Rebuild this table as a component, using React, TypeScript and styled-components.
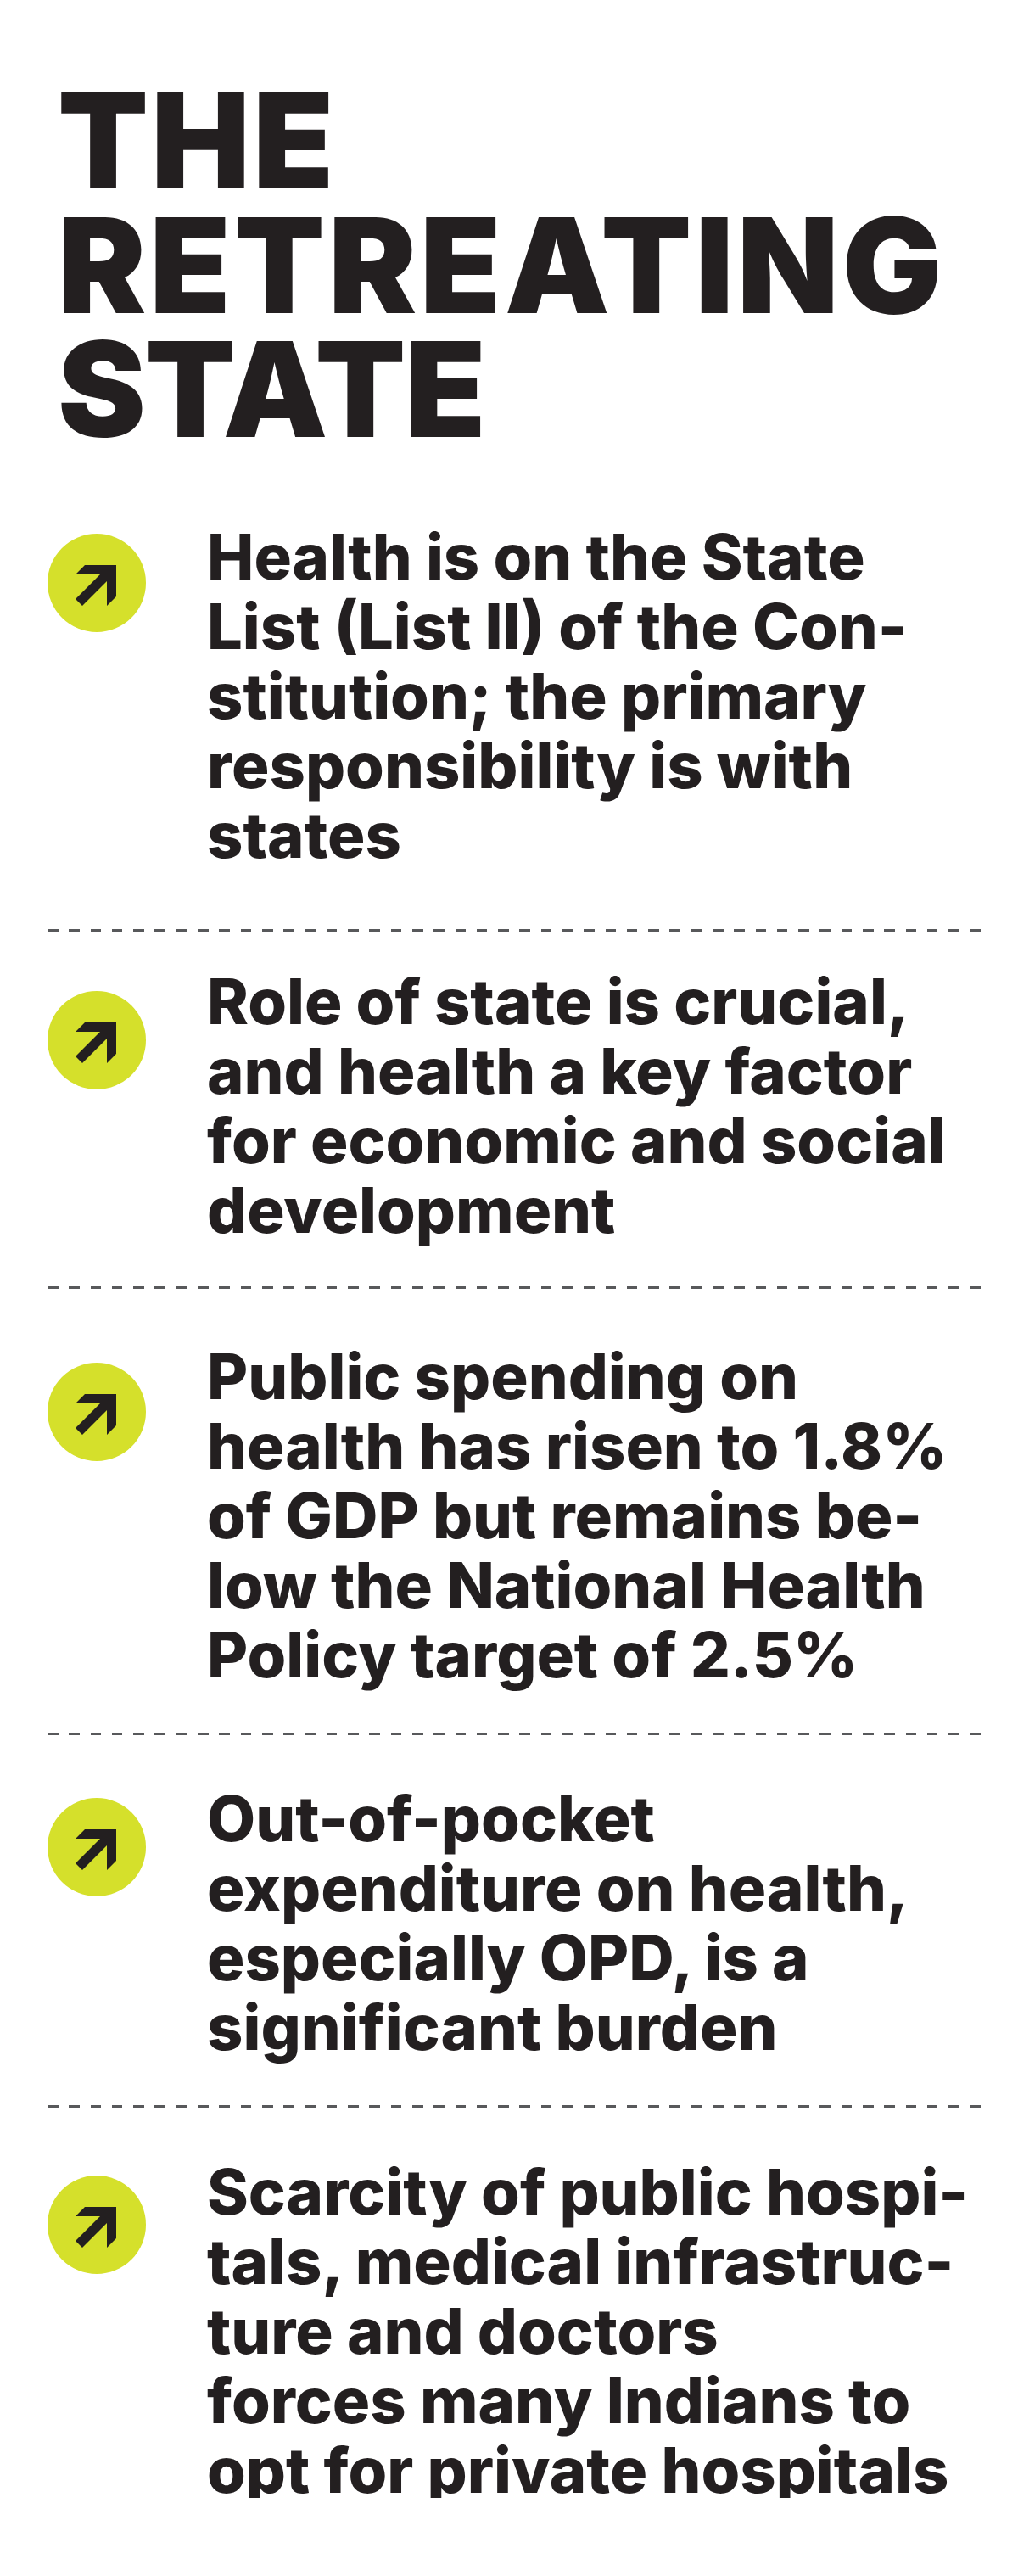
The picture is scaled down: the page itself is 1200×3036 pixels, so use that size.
import * as React from "react";
import styled, { createGlobalStyle } from "styled-components";

const GlobalStyle = createGlobalStyle`
  html, body {
    margin: 0;
    padding: 0;
    background: #ffffff;
  }
  body {
    font-family: "Inter", "Liberation Sans", sans-serif;
    color: #231f20;
  }
`;

const Sheet = styled.div`
  width: 1200px;
  height: 2944px;
  overflow: hidden;
  box-sizing: border-box;
  padding: 93px 44px 0 56px;
`;

const Title = styled.h1`
  margin: 0;
  padding-left: 12px;
  font-family: "Inter", "Liberation Sans", sans-serif;
  font-weight: 900;
  font-size: 156px;
  line-height: 146.5px;
  text-transform: uppercase;
`;

const TitleLine = styled.span<{ $tracking: number }>`
  display: block;
  white-space: nowrap;
  letter-spacing: ${(p) => p.$tracking}px;
`;

const List = styled.div`
  display: flex;
  flex-direction: column;
`;

const Row = styled.div<{ $top: number; $bottom: number; $iconTop: number }>`
  display: grid;
  grid-template-columns: 116px 1fr;
  column-gap: 72px;
  align-items: start;
  padding-top: ${(p) => p.$top}px;
  padding-bottom: ${(p) => p.$bottom}px;

  & > :first-child {
    margin-top: ${(p) => p.$iconTop}px;
  }
`;

const Badge = styled.div`
  width: 116px;
  height: 116px;
  border-radius: 50%;
  background: #d5e02b;
  display: flex;
  align-items: center;
  justify-content: center;

  svg {
    width: 48px;
    height: 48px;
    margin: 5px 3px 0 0;
  }
`;

const Text = styled.p`
  margin: 0;
  font-weight: 800;
  font-size: 74px;
  line-height: 82px;
  letter-spacing: 0;
`;

const Line = styled.span`
  display: block;
  white-space: nowrap;
`;

const Divider = styled.div`
  width: 1100px;
  height: 3px;
  background: repeating-linear-gradient(
    to right,
    #58595b 0,
    #58595b 12.6px,
    transparent 12.6px,
    transparent 25.29px
  );
`;

const Arrow = () => (
  <svg viewBox="0 0 48 48" aria-hidden="true">
    <polygon
      fill="#231f20"
      points="11,0 48,0 48,37 37,48 37,19 8,48 0,40 29,11 0,11"
    />
  </svg>
);

const titleLines = [
  { text: "The", tracking: 3 },
  { text: "Retreating", tracking: 4 },
  { text: "State", tracking: -1 },
];

const points = [
  {
    top: 82.5,
    bottom: 69.5,
    iconTop: 14,
    lines: [
      "Health is on the State",
      "List (List II) of the Con-",
      "stitution; the primary",
      "responsibility is with",
      "states",
    ],
  },
  {
    top: 41.5,
    bottom: 48.5,
    iconTop: 29,
    lines: [
      "Role of state is crucial,",
      "and health a key factor",
      "for economic and social",
      "development",
    ],
  },
  {
    top: 62.5,
    bottom: 50.5,
    iconTop: 25,
    lines: [
      "Public spending on",
      "health has risen to 1.8%",
      "of GDP but remains be-",
      "low the National Health",
      "Policy target of 2.5%",
    ],
  },
  {
    top: 57.5,
    bottom: 50.5,
    iconTop: 17,
    lines: [
      "Out-of-pocket",
      "expenditure on health,",
      "especially OPD, is a",
      "significant burden",
    ],
  },
  {
    top: 58.5,
    bottom: 0,
    iconTop: 22,
    lines: [
      "Scarcity of public hospi-",
      "tals, medical infrastruc-",
      "ture and doctors",
      "forces many Indians to",
      "opt for private hospitals",
    ],
  },
];

export default function App() {
  return (
    <Sheet>
      <GlobalStyle />
      <Title>
        {titleLines.map((l) => (
          <TitleLine key={l.text} $tracking={l.tracking}>
            {l.text}
          </TitleLine>
        ))}
      </Title>
      <List>
        {points.map((item, i) => (
          <React.Fragment key={i}>
            {i > 0 && <Divider />}
            <Row $top={item.top} $bottom={item.bottom} $iconTop={item.iconTop}>
              <Badge>
                <Arrow />
              </Badge>
              <Text>
                {item.lines.map((line) => (
                  <Line key={line}>{line}</Line>
                ))}
              </Text>
            </Row>
          </React.Fragment>
        ))}
      </List>
    </Sheet>
  );
}
